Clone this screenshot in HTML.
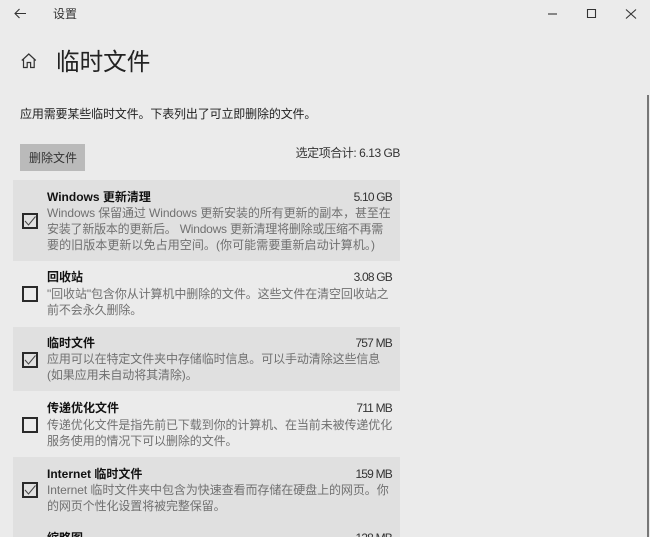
<!DOCTYPE html>
<html lang="zh"><head><meta charset="utf-8"><style>
html,body{margin:0;padding:0;width:650px;height:537px;overflow:hidden;background:#ebebeb}
#w{width:650px;height:537px;overflow:hidden;background:#ebebeb;position:relative;font-family:"Liberation Sans","Noto Sans CJK SC",sans-serif;font-size:12px;color:#222;filter:blur(.3px)}
.a{position:absolute;white-space:nowrap;line-height:16px}
.row{position:absolute;left:13px;width:387px;background:#e0e0e0}
.t{position:absolute;left:47px;white-space:nowrap;line-height:16px;font-weight:700;color:#111}
.s{position:absolute;right:258px;white-space:nowrap;line-height:16px;color:#333;letter-spacing:-.8px}
.d{position:absolute;left:47px;white-space:nowrap;line-height:16px;color:#707070;letter-spacing:-.1px}
.c{position:absolute;left:22px;width:12px;height:12px;border:2px solid #2a2a2a}
svg{position:absolute;overflow:visible}
</style></head><body><div id="w">
<svg style="left:14px;top:8px" width="14" height="12" fill="none" stroke="#333" stroke-width="1.1"><path d="M1 5.5H12M5.5 1L1 5.5L5.5 10"/></svg>
<div class="a" style="left:53px;top:6px;color:#333">设置</div>
<svg style="left:548px;top:9px" width="90" height="10" fill="none" stroke="#333" stroke-width="1.1"><path d="M0 5H9"/><path d="M39.5 .5H47.5V8.5H39.5Z"/><path d="M78 .5L88 9.5M88 .5L78 9.5"/></svg>
<div style="position:absolute;left:647px;top:95px;width:2px;height:442px;background:#777"></div>
<svg style="left:21px;top:53px" width="16" height="16" fill="none" stroke="#333" stroke-width="1.2"><path d="M.8 7.5L7.8 1L14.8 7.5M2.5 6.2V14.5H6.2V9.5H9.6V14.5H13.2V6.2"/></svg>
<div class="a" style="left:56px;top:45px;font-size:23.6px;line-height:36px;color:#222">临时文件</div>
<div class="a" style="left:20px;top:106px;letter-spacing:-.15px;color:#222">应用需要某些临时文件。下表列出了可立即删除的文件。</div>
<div style="position:absolute;left:20px;top:144px;width:65px;height:27px;background:#bababa"></div>
<div class="a" style="left:29px;top:150px;color:#333">删除文件</div>
<div class="a" style="right:250px;top:145px;color:#333;letter-spacing:-.45px">选定项合计: 6.13 GB</div>

<div class="row" style="top:180px;height:81px"></div>
<div class="row" style="top:327px;height:64px"></div>
<div class="row" style="top:457px;height:80px"></div>

<div class="t" style="top:189px">Windows 更新清理</div><div class="s" style="top:189px">5.10 GB</div>
<div class="d" style="top:205px">Windows 保留通过 Windows 更新安装的所有更新的副本，甚至在</div>
<div class="d" style="top:221px;letter-spacing:-.22px">安装了新版本的更新后。 Windows 更新清理将删除或压缩不再需</div>
<div class="d" style="top:237px;letter-spacing:.07px">要的旧版本更新以免占用空间。(你可能需要重新启动计算机。)</div>
<div class="c" style="top:213px"></div>
<svg style="left:24px;top:215px" width="13" height="12" fill="none" stroke="#444"><path d="M1 6L4.5 10L11.5 1.5"/></svg>

<div class="t" style="top:269px">回收站</div><div class="s" style="top:269px">3.08 GB</div>
<div class="d" style="top:286px">"回收站"包含你从计算机中删除的文件。这些文件在清空回收站之</div>
<div class="d" style="top:302px">前不会永久删除。</div>
<div class="c" style="top:286px"></div>

<div class="t" style="top:335px">临时文件</div><div class="s" style="top:335px">757 MB</div>
<div class="d" style="top:351px">应用可以在特定文件夹中存储临时信息。可以手动清除这些信息</div>
<div class="d" style="top:367px">(如果应用未自动将其清除)。</div>
<div class="c" style="top:352px"></div>
<svg style="left:24px;top:354px" width="13" height="12" fill="none" stroke="#444"><path d="M1 6L4.5 10L11.5 1.5"/></svg>

<div class="t" style="top:400px">传递优化文件</div><div class="s" style="top:400px">711 MB</div>
<div class="d" style="top:417px">传递优化文件是指先前已下载到你的计算机、在当前未被传递优化</div>
<div class="d" style="top:433px">服务使用的情况下可以删除的文件。</div>
<div class="c" style="top:417px"></div>

<div class="t" style="top:466px">Internet 临时文件</div><div class="s" style="top:466px">159 MB</div>
<div class="d" style="top:482px;letter-spacing:-.07px">Internet 临时文件夹中包含为快速查看而存储在硬盘上的网页。你</div>
<div class="d" style="top:498px">的网页个性化设置将被完整保留。</div>
<div class="c" style="top:482px"></div>
<svg style="left:24px;top:484px" width="13" height="12" fill="none" stroke="#444"><path d="M1 6L4.5 10L11.5 1.5"/></svg>

<div class="t" style="top:530px">缩略图</div><div class="s" style="top:530px">128 MB</div>
</div></body></html>
